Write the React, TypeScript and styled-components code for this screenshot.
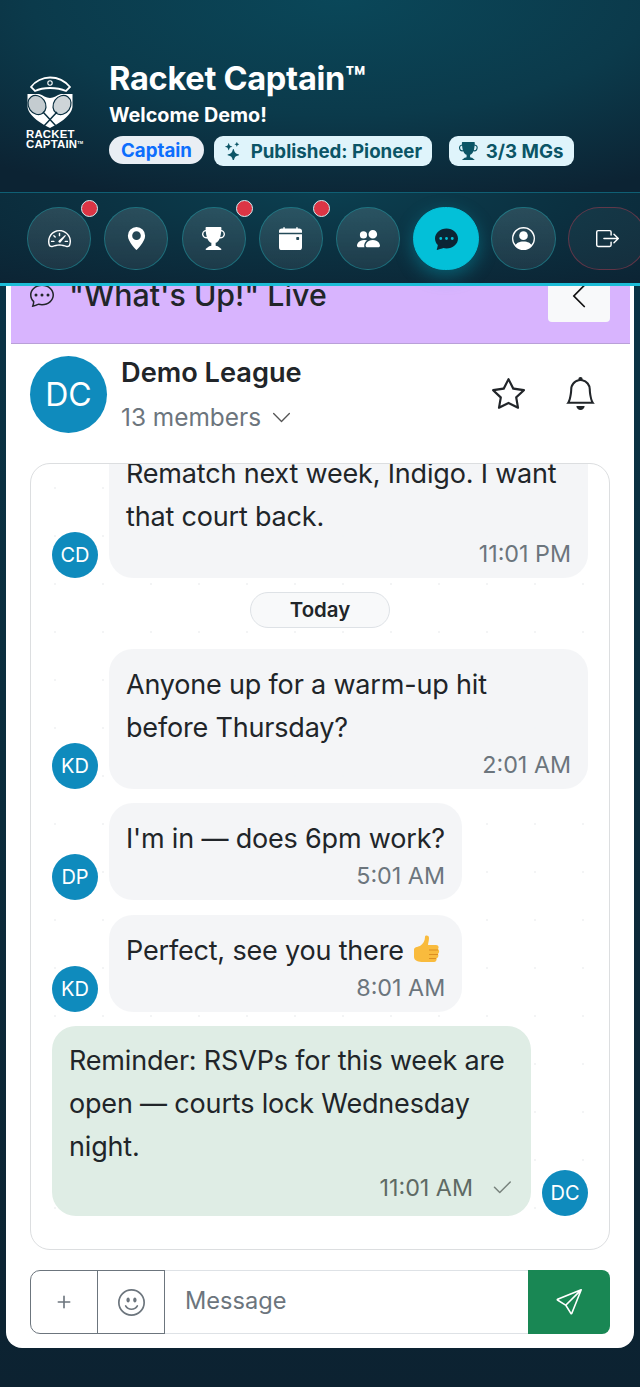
import { createGlobalStyle, styled } from "styled-components";
import {
  BsBell,
  BsBoxArrowRight,
  BsCalendarEventFill,
  BsChatDots,
  BsChatDotsFill,
  BsCheck2,
  BsChevronDown,
  BsChevronLeft,
  BsEmojiSmile,
  BsGeoAltFill,
  BsPeopleFill,
  BsPersonCircle,
  BsPlus,
  BsSend,
  BsSpeedometer2,
  BsStar,
  BsStars,
  BsTrophyFill,
} from "react-icons/bs";

const GlobalStyle = createGlobalStyle`
  html, body {
    margin: 0;
    padding: 0;
    background: #0c2231;
    font-family: Inter, "Liberation Sans", sans-serif;
  }
  * { box-sizing: border-box; }
`;

const Page = styled.div`
  width: 640px;
  height: 1387px;
  overflow: hidden;
  display: flex;
  flex-direction: column;
  background: linear-gradient(180deg, #0a3345 280px, #0b2d3d 700px, #0c2231 1387px);
`;

const Header = styled.header`
  height: 192px;
  flex: none;
  display: flex;
  align-items: flex-end;
  gap: 28px;
  padding: 0 0 26px 26px;
  background: radial-gradient(ellipse 560px 210px at 340px 0, #0a4759 0%, #0b3a4b 55%, #0c2333 100%);
`;

const LogoBlock = styled.div`
  width: 55px;
  display: flex;
  flex-direction: column;
  margin-bottom: 17px;
`;

const LogoText = styled.div`
  font-family: "Liberation Sans", sans-serif;
  font-weight: 700;
  font-size: 11.4px;
  line-height: 10px;
  letter-spacing: 0.2px;
  color: #fff;
  white-space: nowrap;
  margin-top: 1px;

  sup {
    font-size: 4px;
    vertical-align: 4px;
    line-height: 0;
  }
`;

const HeadText = styled.div`
  display: flex;
  flex-direction: column;
`;

const Title = styled.h1`
  margin: 0;
  font-size: 32.6px;
  line-height: 38px;
  font-weight: 700;
  letter-spacing: -0.3px;
  color: #fff;
`;

const Welcome = styled.div`
  font-size: 19.8px;
  line-height: 26px;
  margin-top: 5px;
  font-weight: 700;
  color: #fff;
`;

const Chips = styled.div`
  display: flex;
  margin-top: 8px;
`;

const Chip = styled.span<{ $pill?: boolean; $gap?: number }>`
  height: ${(p) => (p.$pill ? 28 : 30)}px;
  display: inline-flex;
  align-items: center;
  gap: 8px;
  padding: 0 ${(p) => (p.$pill ? 12 : 10)}px;
  margin-right: ${(p) => p.$gap ?? 0}px;
  border-radius: ${(p) => (p.$pill ? 14 : 9)}px;
  background: ${(p) => (p.$pill ? "#e9eef4" : "#dff4fb")};
  color: ${(p) => (p.$pill ? "#0d6efd" : "#0b5566")};
  font-size: 18.7px;
  font-weight: 700;
  white-space: nowrap;
`;

const NavBar = styled.nav`
  height: 94px;
  flex: none;
  display: flex;
  align-items: flex-start;
  gap: 13.3px;
  padding: 14px 0 0 27px;
  border-top: 1px solid #0f5f74;
  border-bottom: 3px solid #1cbcd6;
  background: radial-gradient(ellipse 520px 120px at 320px 0, #0b3f50 0%, #0b3040 50%, #0c2333 100%);
`;

const NavButton = styled.div<{ $active?: boolean; $danger?: boolean; $wide?: number }>`
  position: relative;
  flex: none;
  width: ${(p) => p.$wide ?? 64}px;
  height: 63px;
  border-radius: 32px;
  display: flex;
  align-items: center;
  justify-content: center;
  color: ${(p) => (p.$active ? "#0b2535" : "#fff")};
  font-size: 23px;
  border: 1.5px solid ${(p) => (p.$danger ? "rgba(190, 60, 80, 0.45)" : p.$active ? "#03c0d8" : "rgba(30, 150, 160, 0.55)")};
  background: ${(p) =>
    p.$active
      ? "#03c0d8"
      : p.$danger
        ? "rgba(255, 255, 255, 0.04)"
        : "linear-gradient(180deg, rgba(255,255,255,0.13), rgba(255,255,255,0.07))"};
  box-shadow: ${(p) => (p.$active ? "0 6px 18px rgba(3, 192, 216, 0.35)" : "none")};
  margin-right: ${(p) => (p.$wide === 65.5 ? -1.5 : 0)}px;
`;

const Badge = styled.span`
  position: absolute;
  top: -8px;
  right: -8px;
  width: 17px;
  height: 17px;
  border-radius: 50%;
  background: #dc3545;
  border: 1.5px solid #cfeef2;
`;

const Card = styled.main`
  width: 628px;
  height: 1062px;
  margin-left: 6px;
  flex: none;
  display: flex;
  flex-direction: column;
  padding: 0 4px 14px 5px;
  background: #fff;
  border-radius: 0 0 16px 16px;
`;

const Banner = styled.div`
  height: 58px;
  flex: none;
  overflow: hidden;
  display: flex;
  justify-content: space-between;
  align-items: flex-start;
  padding: 0 20px 0 19px;
  background: #d8b4fe;
  border-bottom: 1px solid #b9a0d8;
`;

const BannerTitle = styled.div`
  display: flex;
  align-items: center;
  gap: 15px;
  margin-top: -11px;
  height: 40px;
  font-size: 30.3px;
  font-weight: 500;
  color: #212529;

  svg {
    font-size: 24px;
  }
`;

const BackButton = styled.div`
  width: 62px;
  height: 36px;
  display: flex;
  justify-content: center;
  align-items: flex-start;
  border-radius: 0 0 4px 4px;
  background: #f8f9fa;
  font-size: 28px;
  color: #111;

  svg {
    margin-top: -4px;
  }
`;

const GroupRow = styled.div`
  height: 119px;
  flex: none;
  display: flex;
  align-items: flex-start;
  padding: 12px 33px 0 19px;
`;

const Avatar = styled.div<{ $size: number }>`
  width: ${(p) => p.$size}px;
  height: ${(p) => p.$size}px;
  flex: none;
  border-radius: 50%;
  display: flex;
  align-items: center;
  justify-content: center;
  background: #0f8bbd;
  color: #fff;
  font-size: ${(p) => (p.$size > 60 ? 32 : 20)}px;
`;

const GroupInfo = styled.div`
  flex: 1;
  margin-left: 14px;
`;

const GroupName = styled.div`
  font-size: 27.2px;
  line-height: 34px;
  font-weight: 600;
  color: #212529;
`;

const Members = styled.div`
  display: flex;
  align-items: center;
  gap: 10px;
  margin-top: 10px;
  font-size: 24.4px;
  line-height: 34px;
  color: #6c757d;

  svg {
    font-size: 21px;
    color: #555;
  }
`;

const GroupActions = styled.div`
  display: flex;
  gap: 39px;
  margin-top: 21px;
  font-size: 33px;
  color: #212529;
`;

const ChatBox = styled.section`
  margin: 0 20px 0 19px;
  height: 787px;
  flex: none;
  overflow: hidden;
  border: 1px solid #dcdee0;
  border-radius: 20px;
  background-color: #fff;
  background-image: radial-gradient(circle, #f3f4f5 1px, transparent 1.5px);
  background-size: 48px 48px;
`;

const MessageList = styled.div`
  display: flex;
  flex-direction: column;
  gap: 14.5px;
  margin-top: -26px;
  padding: 0 21px;
`;

const Row = styled.div<{ $mine?: boolean }>`
  display: flex;
  align-items: flex-end;
  gap: 11px;
  justify-content: ${(p) => (p.$mine ? "flex-end" : "flex-start")};
`;

const Bubble = styled.div<{ $mine?: boolean }>`
  width: fit-content;
  max-width: 479px;
  padding: ${(p) => (p.$mine ? 13 : 14)}px 17px ${(p) => (p.$mine ? 14 : 10)}px;
  border-radius: 24px;
  background: ${(p) => (p.$mine ? "#dfede5" : "rgba(243, 244, 246, 0.92)")};
`;

const MessageText = styled.div`
  font-size: 27px;
  line-height: 43px;
  color: #212529;
  letter-spacing: -0.18px;
`;

const MessageMeta = styled.div<{ $mine?: boolean }>`
  display: flex;
  justify-content: flex-end;
  align-items: center;
  gap: 17px;
  font-size: 23.3px;
  line-height: 29px;
  margin-top: ${(p) => (p.$mine ? 5 : 1)}px;
  color: ${(p) => (p.$mine ? "#5e6a64" : "#6c757d")};

  svg {
    font-size: 24px;
    color: #77827c;
  }
`;

const DayMark = styled.div`
  width: 140px;
  height: 36px;
  align-self: center;
  margin: -1px 0 6.5px;
  display: flex;
  align-items: center;
  justify-content: center;
  border: 1px solid #dee2e6;
  border-radius: 18px;
  background: #f8f9fa;
  font-size: 20.4px;
  font-weight: 600;
  color: #212529;
`;

const Composer = styled.form`
  margin: 20px 20px 0 19px;
  height: 64px;
  flex: none;
  display: flex;
`;

const ComposerButton = styled.div<{ $first?: boolean; $width: number }>`
  width: ${(p) => p.$width}px;
  flex: none;
  display: flex;
  align-items: center;
  justify-content: center;
  margin-left: ${(p) => (p.$first ? 0 : -1)}px;
  border: 1.5px solid #6c757d;
  border-radius: ${(p) => (p.$first ? "10px 0 0 10px" : 0)};
  color: #6c757d;
  font-size: ${(p) => (p.$first ? 26 : 27)}px;
`;

const MessageInput = styled.input`
  flex: 1;
  min-width: 0;
  border: 1.5px solid #dee2e6;
  border-width: 1.5px 0;
  padding: 0 20px 4px;
  outline: none;
  font: inherit;
  font-size: 23.6px;
  color: #212529;

  &::placeholder {
    color: #6c757d;
    opacity: 1;
  }
`;

const SendButton = styled.div`
  width: 82px;
  flex: none;
  display: flex;
  align-items: center;
  justify-content: center;
  border-radius: 0 8px 8px 0;
  background: #198754;
  color: #fff;
  font-size: 26px;
`;

const Thumb = styled.svg`
  width: 30px;
  height: 30px;
  vertical-align: -5px;
  margin-right: 4px;
`;

function RacketLogo() {
  return (
    <svg width="48" height="52" viewBox="0 0 48 52">
      {/* cap: crown, peak and badge */}
      <path d="M5 11 C9 5 17 1.500 24 1.500 C31 1.500 39 5 44 11 L40 15 C31 11 17 11 9 15 Z" fill="none" stroke="#fff" strokeWidth="1.800" />
      <circle cx="24" cy="7" r="2.200" fill="none" stroke="#fff" strokeWidth="1.100" />
      {/* shield */}
      <path d="M1.500 18 L13 18 C17 19 20 22 24 22 C28 22 31 19 35 18 L46.500 18 V30 C46.500 39 34 47 24 52 C14 47 1.500 39 1.500 30 Z" fill="#fff" />
      {/* rackets */}
      <ellipse cx="11" cy="29" rx="8.500" ry="10" transform="rotate(-35 11 29)" fill="#c4ccd0" stroke="#0b3040" strokeWidth="1.200" />
      <ellipse cx="36" cy="29" rx="8.500" ry="10" transform="rotate(35 36 29)" fill="#ced5d8" stroke="#0b3040" strokeWidth="1.200" />
      <path d="M17 36 L30 50 M31 36 L18 50" stroke="#0b3040" strokeWidth="1.500" />
    </svg>
  );
}

function ThumbsUp() {
  return (
    <Thumb viewBox="0 0 30 30">
      <path
        d="M3 15 C3 12 6 12 9 11 C12 9 14 6 14 2 C14 0 18 0 18 3 C18 6 17 8 17 10 L25 10 C28 10 28 13 27 14 C29 16 28 18 27 19 C28 21 27 23 25.500 23.500 C26 25 25 27 23 27 L12 27 C8 27 3 26 3 22 Z"
        fill="#f9bb3d"
      />
      <path d="M18 15 H27 M18 19.500 H27 M18 23.500 H25" stroke="#dc8f22" strokeWidth="1.200" fill="none" />
    </Thumb>
  );
}

export default function App() {
  return (
    <>
      <GlobalStyle />
      <Page>
        <Header>
          <LogoBlock>
            <RacketLogo />
            <LogoText>
              RACKET
              <br />
              CAPTAIN<sup>TM</sup>
            </LogoText>
          </LogoBlock>
          <HeadText>
            <Title>Racket Captain™</Title>
            <Welcome>Welcome Demo!</Welcome>
            <Chips>
              <Chip $pill $gap={10}>Captain</Chip>
              <Chip $gap={17}>
                <BsStars />
                Published: Pioneer
              </Chip>
              <Chip>
                <BsTrophyFill />
                3/3 MGs
              </Chip>
            </Chips>
          </HeadText>
        </Header>

        <NavBar>
          <NavButton>
            <BsSpeedometer2 />
            <Badge />
          </NavButton>
          <NavButton>
            <BsGeoAltFill />
          </NavButton>
          <NavButton>
            <BsTrophyFill />
            <Badge />
          </NavButton>
          <NavButton>
            <BsCalendarEventFill />
            <Badge />
          </NavButton>
          <NavButton>
            <BsPeopleFill />
          </NavButton>
          <NavButton $active $wide={65.5}>
            <BsChatDotsFill />
          </NavButton>
          <NavButton $wide={65.5}>
            <BsPersonCircle />
          </NavButton>
          <NavButton $danger $wide={78}>
            <BsBoxArrowRight />
          </NavButton>
        </NavBar>

        <Card>
          <Banner>
            <BannerTitle>
              <BsChatDots />
              "What's Up!" Live
            </BannerTitle>
            <BackButton>
              <BsChevronLeft />
            </BackButton>
          </Banner>

          <GroupRow>
            <Avatar $size={77}>DC</Avatar>
            <GroupInfo>
              <GroupName>Demo League</GroupName>
              <Members>
                13 members <BsChevronDown />
              </Members>
            </GroupInfo>
            <GroupActions>
              <BsStar />
              <BsBell />
            </GroupActions>
          </GroupRow>

          <ChatBox>
            <MessageList>
              <Row>
                <Avatar $size={46}>CD</Avatar>
                <Bubble>
                  <MessageText>Rematch next week, Indigo. I want that court back.</MessageText>
                  <MessageMeta>11:01 PM</MessageMeta>
                </Bubble>
              </Row>
              <DayMark>Today</DayMark>
              <Row>
                <Avatar $size={46}>KD</Avatar>
                <Bubble>
                  <MessageText>Anyone up for a warm-up hit before Thursday?</MessageText>
                  <MessageMeta>2:01 AM</MessageMeta>
                </Bubble>
              </Row>
              <Row>
                <Avatar $size={46}>DP</Avatar>
                <Bubble>
                  <MessageText>I'm in — does 6pm work?</MessageText>
                  <MessageMeta>5:01 AM</MessageMeta>
                </Bubble>
              </Row>
              <Row>
                <Avatar $size={46}>KD</Avatar>
                <Bubble>
                  <MessageText>
                    Perfect, see you there <ThumbsUp />
                  </MessageText>
                  <MessageMeta>8:01 AM</MessageMeta>
                </Bubble>
              </Row>
              <Row $mine>
                <Bubble $mine>
                  <MessageText>Reminder: RSVPs for this week are open — courts lock Wednesday night.</MessageText>
                  <MessageMeta $mine>
                    11:01 AM <BsCheck2 />
                  </MessageMeta>
                </Bubble>
                <Avatar $size={46}>DC</Avatar>
              </Row>
            </MessageList>
          </ChatBox>

          <Composer>
            <ComposerButton $first $width={68}>
              <BsPlus />
            </ComposerButton>
            <ComposerButton $width={68}>
              <BsEmojiSmile />
            </ComposerButton>
            <MessageInput placeholder="Message" />
            <SendButton>
              <BsSend />
            </SendButton>
          </Composer>
        </Card>
      </Page>
    </>
  );
}
